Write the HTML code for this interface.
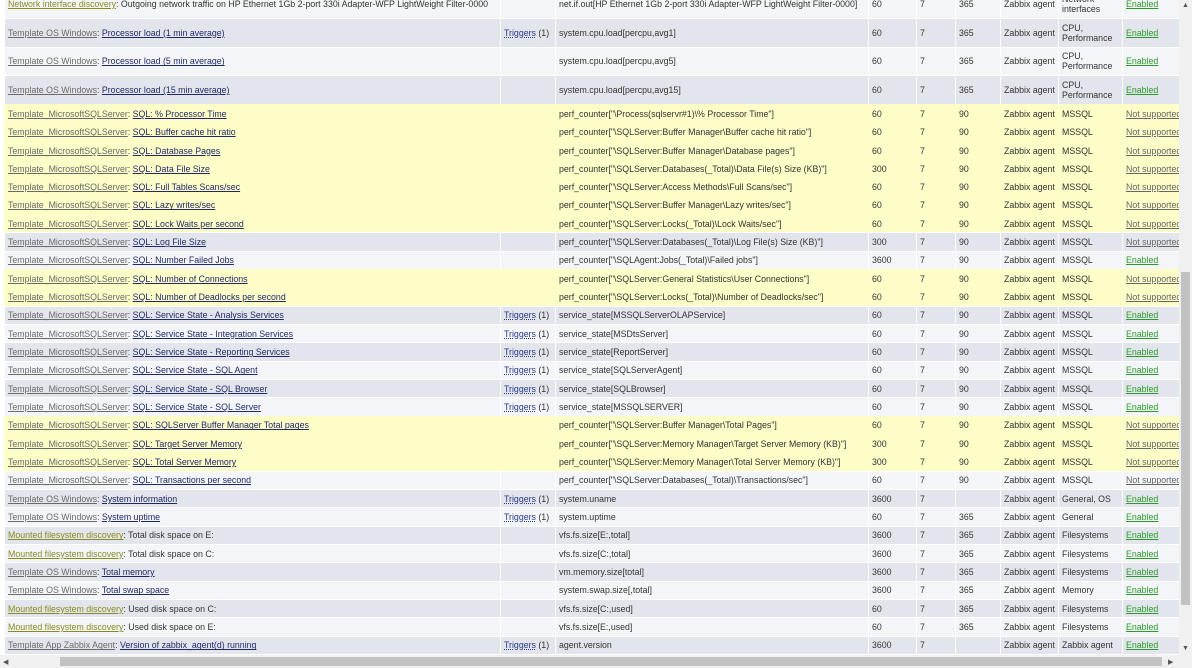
<!DOCTYPE html>
<html><head><meta charset="utf-8"><style>
html,body{margin:0;padding:0;width:1192px;height:668px;overflow:hidden;background:#fff;font-family:"Liberation Sans",Tahoma,sans-serif;}
#wrap{position:absolute;left:0;top:0;width:1179px;height:655px;overflow:hidden;background:#fff}
table{position:absolute;left:4px;top:-11px;border-collapse:collapse;table-layout:fixed;width:1175px;font-size:8.8px;color:#333}
td{border-left:1px solid #fff;border-top:1px solid #fff;padding:0 0 0 3px;white-space:nowrap;overflow:hidden;height:17.33px;line-height:10px}
tr.w td{background:#f4f5f8}
tr.g td{background:#e3e5ec}
tr.y td{background:#fdfdc8;border-color:#fdfdc8}
tr.t td{height:27.8px}
a{color:#222a66;text-decoration:underline}
.tp{color:#6a6a6a}
.d{color:#8a8a22}
.tr{color:#2a3a88;text-decoration:underline dotted}
.en{color:#2a9a2a}
.ns{color:#666}
#vs{position:absolute;left:1179px;top:0;width:13px;height:655px;background:#f0f0f0}
#vt{position:absolute;left:1181px;top:272px;width:9px;height:333px;background:#c2c2c2}
#hs{position:absolute;left:0;top:655px;width:1192px;height:13px;background:#f0f0f0}
#ht{position:absolute;left:60px;top:657px;width:1102px;height:9px;background:#c2c2c2}
.ar{position:absolute;font-size:7px;color:#555}
</style></head><body>
<div id="wrap">
<table>
<colgroup><col style="width:496px"><col style="width:55px"><col style="width:313px"><col style="width:48px"><col style="width:39px"><col style="width:45px"><col style="width:58px"><col style="width:64px"><col style="width:57px"></colgroup>
<tr class="w t"><td><a class="d">Network interface discovery</a>: Outgoing network traffic on HP Ethernet 1Gb 2-port 330i Adapter-WFP LightWeight Filter-0000</td><td></td><td>net.if.out[HP Ethernet 1Gb 2-port 330i Adapter-WFP LightWeight Filter-0000]</td><td>60</td><td>7</td><td>365</td><td>Zabbix agent</td><td>Network<br>interfaces</td><td><a class="en">Enabled</a></td></tr>
<tr class="g t"><td><a class="tp">Template OS Windows</a>: <a>Processor load (1 min average)</a></td><td><a class="tr">Triggers</a> (1)</td><td>system.cpu.load[percpu,avg1]</td><td>60</td><td>7</td><td>365</td><td>Zabbix agent</td><td>CPU,<br>Performance</td><td><a class="en">Enabled</a></td></tr>
<tr class="w t"><td><a class="tp">Template OS Windows</a>: <a>Processor load (5 min average)</a></td><td></td><td>system.cpu.load[percpu,avg5]</td><td>60</td><td>7</td><td>365</td><td>Zabbix agent</td><td>CPU,<br>Performance</td><td><a class="en">Enabled</a></td></tr>
<tr class="g t"><td><a class="tp">Template OS Windows</a>: <a>Processor load (15 min average)</a></td><td></td><td>system.cpu.load[percpu,avg15]</td><td>60</td><td>7</td><td>365</td><td>Zabbix agent</td><td>CPU,<br>Performance</td><td><a class="en">Enabled</a></td></tr>
<tr class="y"><td><a class="tp">Template_MicrosoftSQLServer</a>: <a>SQL: % Processor Time</a></td><td></td><td>perf_counter["\Process(sqlservr#1)\% Processor Time"]</td><td>60</td><td>7</td><td>90</td><td>Zabbix agent</td><td>MSSQL</td><td><a class="ns">Not supported</a></td></tr>
<tr class="y"><td><a class="tp">Template_MicrosoftSQLServer</a>: <a>SQL: Buffer cache hit ratio</a></td><td></td><td>perf_counter["\SQLServer:Buffer Manager\Buffer cache hit ratio"]</td><td>60</td><td>7</td><td>90</td><td>Zabbix agent</td><td>MSSQL</td><td><a class="ns">Not supported</a></td></tr>
<tr class="y"><td><a class="tp">Template_MicrosoftSQLServer</a>: <a>SQL: Database Pages</a></td><td></td><td>perf_counter["\SQLServer:Buffer Manager\Database pages"]</td><td>60</td><td>7</td><td>90</td><td>Zabbix agent</td><td>MSSQL</td><td><a class="ns">Not supported</a></td></tr>
<tr class="y"><td><a class="tp">Template_MicrosoftSQLServer</a>: <a>SQL: Data File Size</a></td><td></td><td>perf_counter["\SQLServer:Databases(_Total)\Data File(s) Size (KB)"]</td><td>300</td><td>7</td><td>90</td><td>Zabbix agent</td><td>MSSQL</td><td><a class="ns">Not supported</a></td></tr>
<tr class="y"><td><a class="tp">Template_MicrosoftSQLServer</a>: <a>SQL: Full Tables Scans/sec</a></td><td></td><td>perf_counter["\SQLServer:Access Methods\Full Scans/sec"]</td><td>60</td><td>7</td><td>90</td><td>Zabbix agent</td><td>MSSQL</td><td><a class="ns">Not supported</a></td></tr>
<tr class="y"><td><a class="tp">Template_MicrosoftSQLServer</a>: <a>SQL: Lazy writes/sec</a></td><td></td><td>perf_counter["\SQLServer:Buffer Manager\Lazy writes/sec"]</td><td>60</td><td>7</td><td>90</td><td>Zabbix agent</td><td>MSSQL</td><td><a class="ns">Not supported</a></td></tr>
<tr class="y"><td><a class="tp">Template_MicrosoftSQLServer</a>: <a>SQL: Lock Waits per second</a></td><td></td><td>perf_counter["\SQLServer:Locks(_Total)\Lock Waits/sec"]</td><td>60</td><td>7</td><td>90</td><td>Zabbix agent</td><td>MSSQL</td><td><a class="ns">Not supported</a></td></tr>
<tr class="g"><td><a class="tp">Template_MicrosoftSQLServer</a>: <a>SQL: Log File Size</a></td><td></td><td>perf_counter["\SQLServer:Databases(_Total)\Log File(s) Size (KB)"]</td><td>300</td><td>7</td><td>90</td><td>Zabbix agent</td><td>MSSQL</td><td><a class="ns">Not supported</a></td></tr>
<tr class="w"><td><a class="tp">Template_MicrosoftSQLServer</a>: <a>SQL: Number Failed Jobs</a></td><td></td><td>perf_counter["\SQLAgent:Jobs(_Total)\Failed jobs"]</td><td>3600</td><td>7</td><td>90</td><td>Zabbix agent</td><td>MSSQL</td><td><a class="en">Enabled</a></td></tr>
<tr class="y"><td><a class="tp">Template_MicrosoftSQLServer</a>: <a>SQL: Number of Connections</a></td><td></td><td>perf_counter["\SQLServer:General Statistics\User Connections"]</td><td>60</td><td>7</td><td>90</td><td>Zabbix agent</td><td>MSSQL</td><td><a class="ns">Not supported</a></td></tr>
<tr class="y"><td><a class="tp">Template_MicrosoftSQLServer</a>: <a>SQL: Number of Deadlocks per second</a></td><td></td><td>perf_counter["\SQLServer:Locks(_Total)\Number of Deadlocks/sec"]</td><td>60</td><td>7</td><td>90</td><td>Zabbix agent</td><td>MSSQL</td><td><a class="ns">Not supported</a></td></tr>
<tr class="g"><td><a class="tp">Template_MicrosoftSQLServer</a>: <a>SQL: Service State - Analysis Services</a></td><td><a class="tr">Triggers</a> (1)</td><td>service_state[MSSQLServerOLAPService]</td><td>60</td><td>7</td><td>90</td><td>Zabbix agent</td><td>MSSQL</td><td><a class="en">Enabled</a></td></tr>
<tr class="w"><td><a class="tp">Template_MicrosoftSQLServer</a>: <a>SQL: Service State - Integration Services</a></td><td><a class="tr">Triggers</a> (1)</td><td>service_state[MSDtsServer]</td><td>60</td><td>7</td><td>90</td><td>Zabbix agent</td><td>MSSQL</td><td><a class="en">Enabled</a></td></tr>
<tr class="g"><td><a class="tp">Template_MicrosoftSQLServer</a>: <a>SQL: Service State - Reporting Services</a></td><td><a class="tr">Triggers</a> (1)</td><td>service_state[ReportServer]</td><td>60</td><td>7</td><td>90</td><td>Zabbix agent</td><td>MSSQL</td><td><a class="en">Enabled</a></td></tr>
<tr class="w"><td><a class="tp">Template_MicrosoftSQLServer</a>: <a>SQL: Service State - SQL Agent</a></td><td><a class="tr">Triggers</a> (1)</td><td>service_state[SQLServerAgent]</td><td>60</td><td>7</td><td>90</td><td>Zabbix agent</td><td>MSSQL</td><td><a class="en">Enabled</a></td></tr>
<tr class="g"><td><a class="tp">Template_MicrosoftSQLServer</a>: <a>SQL: Service State - SQL Browser</a></td><td><a class="tr">Triggers</a> (1)</td><td>service_state[SQLBrowser]</td><td>60</td><td>7</td><td>90</td><td>Zabbix agent</td><td>MSSQL</td><td><a class="en">Enabled</a></td></tr>
<tr class="w"><td><a class="tp">Template_MicrosoftSQLServer</a>: <a>SQL: Service State - SQL Server</a></td><td><a class="tr">Triggers</a> (1)</td><td>service_state[MSSQLSERVER]</td><td>60</td><td>7</td><td>90</td><td>Zabbix agent</td><td>MSSQL</td><td><a class="en">Enabled</a></td></tr>
<tr class="y"><td><a class="tp">Template_MicrosoftSQLServer</a>: <a>SQL: SQLServer Buffer Manager Total pages</a></td><td></td><td>perf_counter["\SQLServer:Buffer Manager\Total Pages"]</td><td>60</td><td>7</td><td>90</td><td>Zabbix agent</td><td>MSSQL</td><td><a class="ns">Not supported</a></td></tr>
<tr class="y"><td><a class="tp">Template_MicrosoftSQLServer</a>: <a>SQL: Target Server Memory</a></td><td></td><td>perf_counter["\SQLServer:Memory Manager\Target Server Memory (KB)"]</td><td>300</td><td>7</td><td>90</td><td>Zabbix agent</td><td>MSSQL</td><td><a class="ns">Not supported</a></td></tr>
<tr class="y"><td><a class="tp">Template_MicrosoftSQLServer</a>: <a>SQL: Total Server Memory</a></td><td></td><td>perf_counter["\SQLServer:Memory Manager\Total Server Memory (KB)"]</td><td>300</td><td>7</td><td>90</td><td>Zabbix agent</td><td>MSSQL</td><td><a class="ns">Not supported</a></td></tr>
<tr class="w"><td><a class="tp">Template_MicrosoftSQLServer</a>: <a>SQL: Transactions per second</a></td><td></td><td>perf_counter["\SQLServer:Databases(_Total)\Transactions/sec"]</td><td>60</td><td>7</td><td>90</td><td>Zabbix agent</td><td>MSSQL</td><td><a class="ns">Not supported</a></td></tr>
<tr class="g"><td><a class="tp">Template OS Windows</a>: <a>System information</a></td><td><a class="tr">Triggers</a> (1)</td><td>system.uname</td><td>3600</td><td>7</td><td></td><td>Zabbix agent</td><td>General, OS</td><td><a class="en">Enabled</a></td></tr>
<tr class="w"><td><a class="tp">Template OS Windows</a>: <a>System uptime</a></td><td><a class="tr">Triggers</a> (1)</td><td>system.uptime</td><td>60</td><td>7</td><td>365</td><td>Zabbix agent</td><td>General</td><td><a class="en">Enabled</a></td></tr>
<tr class="g"><td><a class="d">Mounted filesystem discovery</a>: Total disk space on E:</td><td></td><td>vfs.fs.size[E:,total]</td><td>3600</td><td>7</td><td>365</td><td>Zabbix agent</td><td>Filesystems</td><td><a class="en">Enabled</a></td></tr>
<tr class="w"><td><a class="d">Mounted filesystem discovery</a>: Total disk space on C:</td><td></td><td>vfs.fs.size[C:,total]</td><td>3600</td><td>7</td><td>365</td><td>Zabbix agent</td><td>Filesystems</td><td><a class="en">Enabled</a></td></tr>
<tr class="g"><td><a class="tp">Template OS Windows</a>: <a>Total memory</a></td><td></td><td>vm.memory.size[total]</td><td>3600</td><td>7</td><td>365</td><td>Zabbix agent</td><td>Filesystems</td><td><a class="en">Enabled</a></td></tr>
<tr class="w"><td><a class="tp">Template OS Windows</a>: <a>Total swap space</a></td><td></td><td>system.swap.size[,total]</td><td>3600</td><td>7</td><td>365</td><td>Zabbix agent</td><td>Memory</td><td><a class="en">Enabled</a></td></tr>
<tr class="g"><td><a class="d">Mounted filesystem discovery</a>: Used disk space on C:</td><td></td><td>vfs.fs.size[C:,used]</td><td>60</td><td>7</td><td>365</td><td>Zabbix agent</td><td>Filesystems</td><td><a class="en">Enabled</a></td></tr>
<tr class="w"><td><a class="d">Mounted filesystem discovery</a>: Used disk space on E:</td><td></td><td>vfs.fs.size[E:,used]</td><td>60</td><td>7</td><td>365</td><td>Zabbix agent</td><td>Filesystems</td><td><a class="en">Enabled</a></td></tr>
<tr class="g"><td><a class="tp">Template App Zabbix Agent</a>: <a>Version of zabbix_agent(d) running</a></td><td><a class="tr">Triggers</a> (1)</td><td>agent.version</td><td>3600</td><td>7</td><td></td><td>Zabbix agent</td><td>Zabbix agent</td><td><a class="en">Enabled</a></td></tr>
</table>
</div>
<div id="vs"></div><div id="vt"></div>
<div id="hs"></div><div id="ht"></div>
<div class="ar" style="left:1182px;top:2px">▲</div>
<div class="ar" style="left:1182px;top:645px">▼</div>
<div class="ar" style="left:3px;top:658px">◀</div>
<div class="ar" style="left:1168px;top:658px">▶</div>
</body></html>
